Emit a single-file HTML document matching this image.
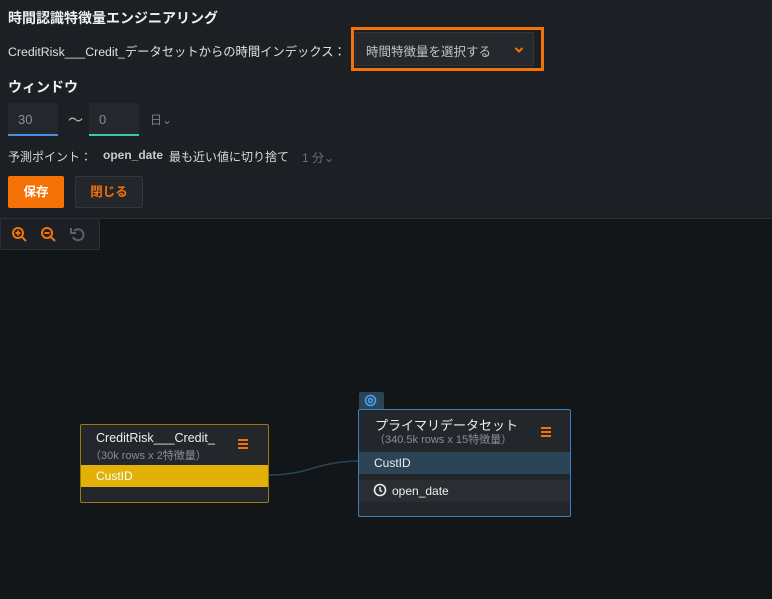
<!DOCTYPE html>
<html><head><meta charset="utf-8"><style>
*{margin:0;padding:0;box-sizing:border-box}
body{width:772px;height:599px;background:#131619;font-family:"Liberation Sans","Noto Sans CJK JP",sans-serif;color:#e6e6e6;position:relative;overflow:hidden;font-size:12px}
.top{position:absolute;left:0;top:0;width:772px;height:219px;background:#1c1f23;border-bottom:1px solid #2c3035}
.a{position:absolute;white-space:nowrap}
.h{font-size:14px;font-weight:bold;color:#f0f0f0}
.inp{position:absolute;background:#24282c;height:33px;color:#8a8e93;font-size:13px;padding:9px 10px}
.node{position:absolute;background:#23272b;border-radius:2px}
</style></head><body>
<div class="top">
<div class="a h" style="left:8px;top:8px">時間認識特徴量エンジニアリング</div>
<div class="a" style="left:8px;top:42px;font-size:12.3px;color:#e0e0e0">CreditRisk___Credit_データセットからの時間インデックス：</div>
<div class="a" style="left:351px;top:27px;width:193px;height:44px;border:3px solid #f57206"></div>
<div class="a" style="left:355px;top:32px;width:179px;height:34px;background:#25292d;border:1px solid #30353a;color:#bfc2c5;font-size:12.5px;padding:8px 10px">時間特徴量を選択する</div>
<svg class="a" style="left:514px;top:46px" width="10" height="8" viewBox="0 0 10 8"><path d="M1.5 2L5 5.5 8.5 2" stroke="#f57206" stroke-width="2" fill="none"/></svg>
<div class="a h" style="left:8px;top:77px">ウィンドウ</div>
<div class="inp" style="left:8px;top:103px;width:50px;border-bottom:2px solid #4a90e2">30</div>
<div class="a" style="left:68px;top:109px;font-size:15px;color:#bbb">～</div>
<div class="inp" style="left:89px;top:103px;width:50px;border-bottom:2px solid #3cc9a8">0</div>
<div class="a" style="left:150px;top:111px;color:#7b7f84;font-size:12px">日⌄</div>
<div class="a" style="left:8px;top:148px;color:#d8d8d8">予測ポイント：</div>
<div class="a" style="left:103px;top:148px;color:#c8cbce;font-weight:bold">open_date</div>
<div class="a" style="left:169px;top:148px;color:#d8d8d8">最も近い値に切り捨て</div>
<div class="a" style="left:302px;top:149px;color:#6d7176">1 分⌄</div>
<div class="a" style="left:8px;top:176px;width:56px;height:32px;background:#f57206;color:#fff;font-weight:bold;text-align:center;line-height:32px;font-size:12.5px;border-radius:2px">保存</div>
<div class="a" style="left:75px;top:176px;width:68px;height:32px;background:#23272b;border:1px solid #33373c;color:#f57206;font-weight:bold;text-align:center;line-height:30px;font-size:12.5px;border-radius:2px">閉じる</div>
</div>
<div class="a" style="left:0;top:219px;width:100px;height:31px;background:#1c1f23;border:1px solid #2c3035;border-top:none"></div>
<svg class="a" style="left:11px;top:226px" width="80" height="18" viewBox="0 0 80 18">
<g stroke="#f57206" stroke-width="2" fill="none"><circle cx="7" cy="7" r="5"/><path d="M11 11l4 4M7 4.5v5M4.5 7h5"/><circle cx="36" cy="7" r="5"/><path d="M40 11l4 4M33.5 7h5"/></g>
<path d="M63 5a5.5 5.5 0 1 1-1 6" stroke="#5d6166" stroke-width="2" fill="none"/><path d="M60 2v5h5" stroke="#5d6166" stroke-width="2" fill="none"/>
</svg>
<svg class="a" style="left:0;top:0" width="772" height="599"><path d="M268 475C310 475 315 462 358 461" stroke="#2b4556" stroke-width="1.5" fill="none"/></svg>
<div class="node" style="left:80px;top:424px;width:189px;height:79px;border:1px solid #9a7b12">
<div class="a" style="left:15px;top:6px;font-size:12.5px;color:#eee">CreditRisk___Credit_</div>
<div class="a" style="left:9px;top:22px;font-size:11px;color:#8a8e93">（30k rows x 2特徴量）</div>
<div class="a" style="left:157px;top:14px;width:10px;height:10px;border-top:2px solid #f57206;border-bottom:2px solid #f57206"><div style="margin-top:2px;border-top:2px solid #f57206"></div></div>
<div class="a" style="left:0;top:40px;width:187px;height:22px;background:#e2b007;color:#fff;padding:4px 15px">CustID</div>
</div>
<div class="a" style="left:359px;top:392px;width:25px;height:18px;background:#2b4556;border-radius:2px 2px 0 0"></div>
<svg class="a" style="left:364px;top:394px" width="13" height="13" viewBox="0 0 13 13"><circle cx="6.5" cy="6.5" r="5" stroke="#4aa3f0" stroke-width="1.5" fill="none"/><circle cx="6.5" cy="6.5" r="2" stroke="#4aa3f0" stroke-width="1.5" fill="none"/></svg>
<div class="node" style="left:358px;top:409px;width:213px;height:108px;border:1px solid #3a82bf">
<div class="a" style="left:16px;top:5px;font-size:13px;color:#eee">プライマリデータセット</div>
<div class="a" style="left:15px;top:21px;font-size:11px;color:#8a8e93">（340.5k rows x 15特徴量）</div>
<div class="a" style="left:182px;top:17px;width:10px;height:10px;border-top:2px solid #f57206;border-bottom:2px solid #f57206"><div style="margin-top:2px;border-top:2px solid #f57206"></div></div>
<div class="a" style="left:0;top:42px;width:211px;height:22px;background:#2b4556;color:#eee;padding:4px 15px">CustID</div>
<div class="a" style="left:0;top:70px;width:211px;height:22px;background:#2a2e33;color:#eee;padding:4px 0 0 33px">open_date</div>
<svg class="a" style="left:14px;top:73px" width="14" height="14" viewBox="0 0 14 14"><circle cx="7" cy="7" r="5.5" stroke="#eee" stroke-width="1.6" fill="none"/><path d="M7 4v3.3l2 1.5" stroke="#eee" stroke-width="1.5" fill="none"/></svg>
</div>
</body></html>
